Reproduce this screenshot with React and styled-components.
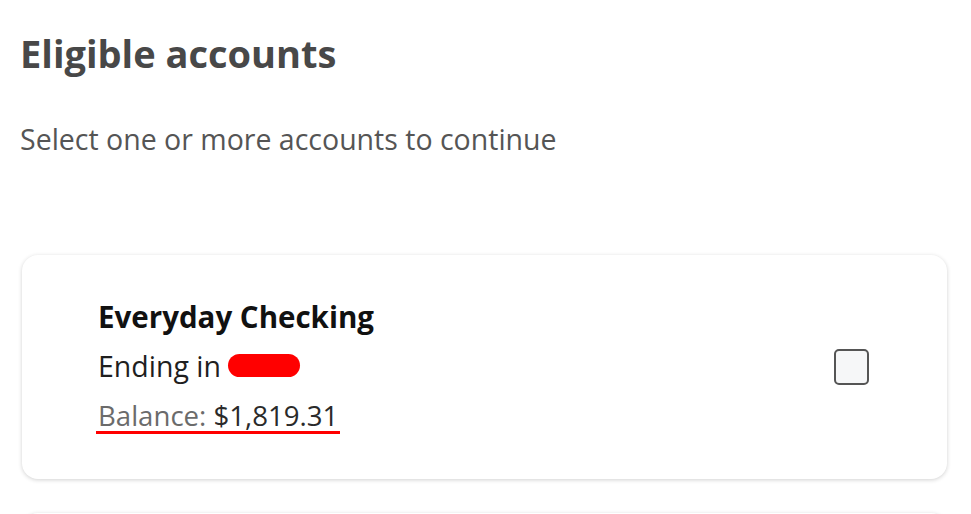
import React from 'react';
import styled, { createGlobalStyle } from 'styled-components';

const GlobalStyle = createGlobalStyle`
  body {
    margin: 0;
    background: #ffffff;
    font-family: 'Open Sans', 'Noto Sans', sans-serif;
  }
`;

const Page = styled.main`
  padding: 23px 24px 0 20px;
  display: flex;
  flex-direction: column;
`;

const Title = styled.h1`
  margin: 0;
  font-size: 38px;
  line-height: 60px;
  font-weight: 700;
  color: #484848;
`;

const Subtitle = styled.p`
  margin: 36px 0 0 0;
  font-size: 28.5px;
  line-height: 40px;
  color: #555555;
`;

const List = styled.div`
  margin-top: 96px;
  display: flex;
  flex-direction: column;
  gap: 34px;
  padding-left: 2px;
`;

const Card = styled.div`
  display: flex;
  align-items: center;
  justify-content: space-between;
  min-height: 224px;
  box-sizing: border-box;
  padding: 0 78px 0 76px;
  background: #ffffff;
  border-radius: 16px;
  box-shadow: 0 1px 4px rgba(0, 0, 0, 0.18);
`;

const Info = styled.div`
  display: flex;
  flex-direction: column;
`;

const Name = styled.div`
  font-size: 29.5px;
  line-height: 50px;
  font-weight: 700;
  color: #111111;
`;

const Line = styled.div`
  font-size: 28.5px;
  line-height: 48px;
  height: ${(p) => (p.$tall ? '53px' : '48px')};
  color: #1f1f1f;
  display: flex;
  align-items: center;
  gap: 7px;
`;

const Redacted = styled.span`
  display: inline-block;
  width: 72px;
  height: 23px;
  border-radius: 12px;
  background: #ff0000;
`;

const Balance = styled.span`
  display: inline-block;
  border-bottom: 3px solid #ff0000;
  margin-left: -2px;
  padding: 0 2px;
  font-size: 27.6px;
  line-height: 32px;
  color: #6b6b6b;
`;

const Amount = styled.span`
  color: #2a2a2a;
`;

const Checkbox = styled.span`
  width: 35px;
  height: 36px;
  box-sizing: border-box;
  border: 2px solid #555555;
  border-radius: 5px;
  background: #f6f7f8;
`;

const accounts = [
  { name: 'Everyday Checking', balance: '$1,819.31' },
  { name: 'Way2Save Savings', balance: '$0.00' },
];

const App = () => (
  <Page>
    <GlobalStyle />
    <Title>Eligible accounts</Title>
    <Subtitle>Select one or more accounts to continue</Subtitle>
    <List>
      {accounts.map((a) => (
        <Card key={a.name}>
          <Info>
            <Name>{a.name}</Name>
            <Line>
              Ending in <Redacted />
            </Line>
            <Line $tall>
              <Balance>
                Balance: <Amount>{a.balance}</Amount>
              </Balance>
            </Line>
          </Info>
          <Checkbox role="checkbox" aria-checked="false" />
        </Card>
      ))}
    </List>
  </Page>
);

export default App;
